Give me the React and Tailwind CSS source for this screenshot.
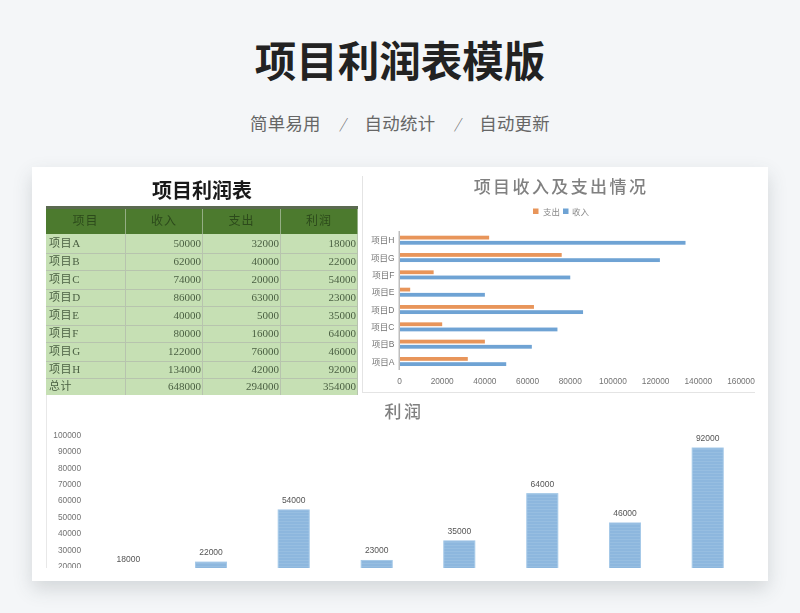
const cjk = "font-['Liberation_Serif','Noto_Sans_CJK_SC',serif]";

const rows = [
  ["项目A", 50000, 32000, 18000],
  ["项目B", 62000, 40000, 22000],
  ["项目C", 74000, 20000, 54000],
  ["项目D", 86000, 63000, 23000],
  ["项目E", 40000, 5000, 35000],
  ["项目F", 80000, 16000, 64000],
  ["项目G", 122000, 76000, 46000],
  ["项目H", 134000, 42000, 92000],
  ["总计", 648000, 294000, 354000],
];

function Table() {
  return (
    <div className={`grid grid-cols-[80px_77px_78px_77px] grid-rows-[3px_24.5px_20px_17px_19px_17.5px_18.5px_17px_19.5px_16.5px_16.5px] text-[11px] leading-none text-[#4a5f42] ${cjk}`}>
      <div className="col-span-4 bg-[#5b6a50]" />
      {["项目", "收入", "支出", "利润"].map((h) => (
        <div key={h} className="flex items-center justify-center border-r border-[#94ae84] bg-[#4c7a2e] text-[12px] tracking-[1px] text-[#2c4a1b]">
          {h}
        </div>
      ))}
      {rows.map((r, i) =>
        r.map((c, j) => (
          <div
            key={`${i}-${j}`}
            className={`flex items-center border-r border-[#b7c4ae] bg-[#c6e0b4] ${i < 8 ? "border-b" : ""} ${j === 0 ? "justify-start pl-[3px] tracking-[0.6px]" : "justify-end pr-[1px]"}`}
          >
            {c}
          </div>
        ))
      )}
    </div>
  );
}

const hb = [
  ["项目H", 42000, 134000],
  ["项目G", 76000, 122000],
  ["项目F", 16000, 80000],
  ["项目E", 5000, 40000],
  ["项目D", 63000, 86000],
  ["项目C", 20000, 74000],
  ["项目B", 40000, 62000],
  ["项目A", 32000, 50000],
];

function BarChart() {
  const ox = 36.5;
  const sc = 341.5 / 160000;
  return (
    <svg width="392" height="216" viewBox="0 -4 392 216" className="block font-['Liberation_Sans','Noto_Sans_CJK_SC',sans-serif]">
      <text x="198" y="13" textAnchor="middle" fontSize="17" fontWeight="500" letterSpacing="2.4" fill="#808080">项目收入及支出情况</text>
      <rect x="170" y="28.5" width="5.5" height="5.5" fill="#e8955a" />
      <text x="180" y="35" fontSize="8.5" fill="#8a8a8a">支出</text>
      <rect x="200" y="28.5" width="5.5" height="5.5" fill="#6fa3d4" />
      <text x="209" y="35" fontSize="8.5" fill="#8a8a8a">收入</text>
      {hb.map(([n, e, r], i) => {
        const y = 55.7 + i * 17.33;
        return (
          <g key={n}>
            <text x="31.5" y={y + 7.5} textAnchor="end" fontSize="8.5" fill="#737373">{n}</text>
            <rect x={ox} y={y} width={e * sc} height="3.8" fill="#e8955a" />
            <rect x={ox} y={y + 5.2} width={r * sc} height="3.8" fill="#6fa3d4" />
          </g>
        );
      })}
      <rect x="35.5" y="51" width="1.5" height="139" fill="#bdbdbd" />
      {[0, 20000, 40000, 60000, 80000, 100000, 120000, 140000, 160000].map((v) => (
        <text key={v} x={ox + v * sc} y="203.5" textAnchor="middle" fontSize="8.3" fill="#737373">{v}</text>
      ))}
    </svg>
  );
}

const cb = [
  [128.3, 18000],
  [211, 22000],
  [293.7, 54000],
  [376.7, 23000],
  [459.3, 35000],
  [542.3, 64000],
  [625, 46000],
  [707.7, 92000],
];

function ColumnChart() {
  const X0 = 47;
  const Y0 = 395;
  const top = (v) => 448 + (92000 - v) * 0.00163 - Y0;
  return (
    <svg width="708" height="173" viewBox="0 0 708 173" className="block font-['Liberation_Sans','Noto_Sans_CJK_SC',sans-serif]">
      <defs>
        <pattern id="stripe" width="4" height="3" patternUnits="userSpaceOnUse">
          <rect width="4" height="3" fill="#8db7de" />
          <rect width="4" height="1" fill="#97bee1" />
        </pattern>
      </defs>
      <text x="357" y="23" textAnchor="middle" fontSize="17" fontWeight="500" letterSpacing="2.6" fill="#808080">利润</text>
      {[100000, 90000, 80000, 70000, 60000, 50000, 40000, 30000, 20000].map((v, i) => (
        <text key={v} x="34" y={42.7 + i * 16.4} textAnchor="end" fontSize="8.3" fill="#737373">{v}</text>
      ))}
      {cb.map(([x, v]) => {
        const t = top(v);
        return (
          <g key={v}>
            {t < 173 && (
              <rect x={x - X0 - 15.5} y={t} width="31" height={173 - t + 4} fill="url(#stripe)" stroke="#a6c9e8" strokeWidth="1" />
            )}
            <text x={x - X0} y={t - 7} textAnchor="middle" fontSize="8.5" fill="#555555">{v}</text>
          </g>
        );
      })}
    </svg>
  );
}

export default function App() {
  return (
    <div className="flex h-[613px] w-[800px] flex-col items-center overflow-hidden bg-[#f4f6f8] font-['Noto_Sans_CJK_SC',sans-serif]">
      <h1 className="mt-[30px] h-[58px] text-[41.5px] font-bold leading-[58px] text-[#222222]">项目利润表模版</h1>
      <div className="mt-[22px] flex h-[26px] items-center gap-[19px] text-[17.4px] leading-[26px] tracking-[0.3px] text-[#666666]">
        <span>简单易用</span>
        <span className="text-[14px] font-light italic">/</span>
        <span>自动统计</span>
        <span className="text-[14px] font-light italic">/</span>
        <span>自动更新</span>
      </div>
      <div className="mt-[31px] flex h-[414px] w-[736px] flex-col bg-white pl-[14px] shadow-[0_8px_18px_rgba(60,70,80,0.18)]">
        <div className="flex h-[228px] items-start gap-[4px] blur-[0.3px]">
          <div className="w-[312px]">
            <div className="flex h-[39px] items-center justify-center pt-[7px] text-[20px] font-bold leading-none text-[#1a1a1a]">项目利润表</div>
            <Table />
          </div>
          <div className="mt-[9px] border-b border-l border-[#e4e4e4]">
            <BarChart />
          </div>
        </div>
        <div className="border-l border-[#e8e8e8] blur-[0.3px]">
          <ColumnChart />
        </div>
      </div>
    </div>
  );
}
